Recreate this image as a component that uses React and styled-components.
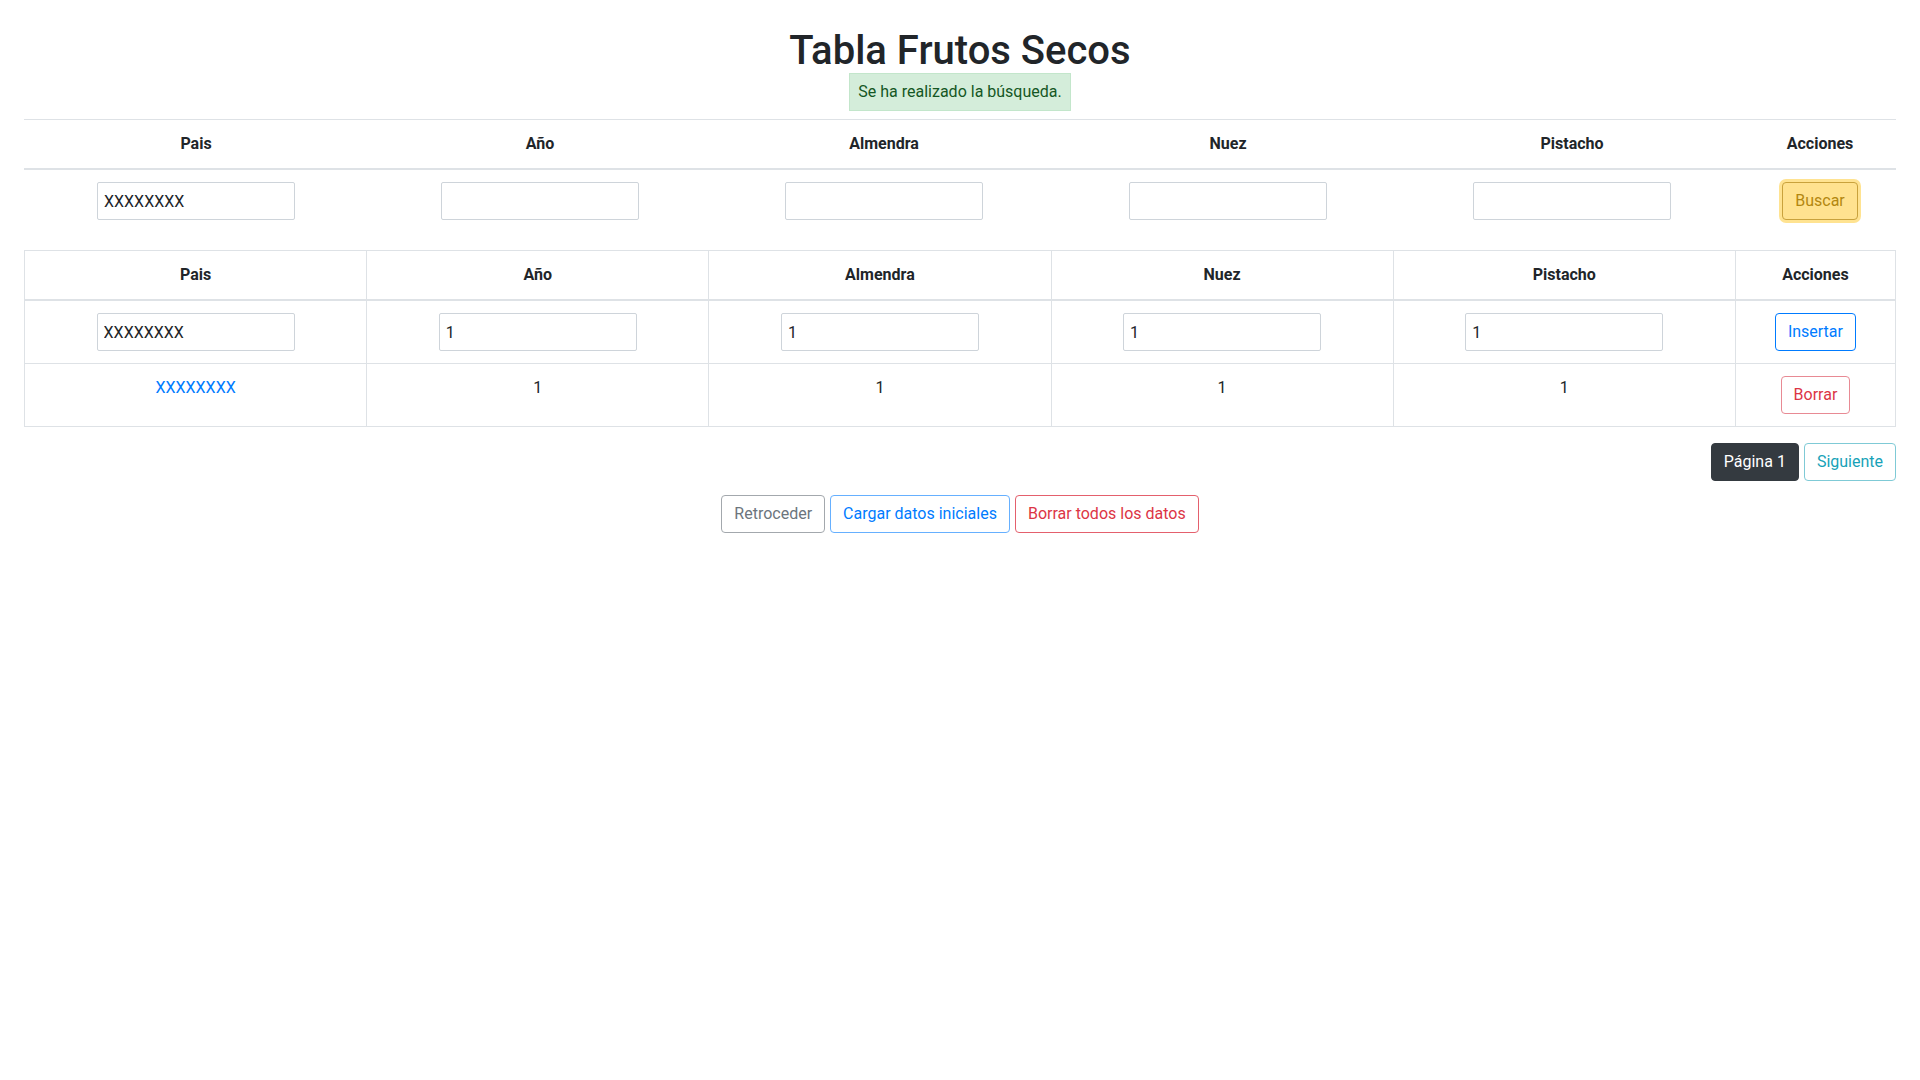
import styled, { createGlobalStyle, css } from "styled-components";

//STYLE

const GlobalStyle = createGlobalStyle`
  body {
    margin: 0;
    background: #fff;
    color: #212529;
    font-family: "Segoe UI", Roboto, "Liberation Sans", sans-serif;
    font-size: 16px;
    line-height: 24px;
  }
  * { box-sizing: border-box; }
`;

const Page = styled.div`
  padding: 0 24px;
  display: flex;
  flex-direction: column;
  align-items: center;
`;

const Title = styled.h1`
  margin: 29px 0 0;
  font-size: 40px;
  line-height: 44px;
  font-weight: 500;
  color: #212529;
`;

const Alert = styled.div`
  margin: 0 0 8px;
  padding: 6px 8px;
  background: #d4edda;
  border: 1px solid #c3e6cb;
  color: #155724;
`;

const Table = styled.table`
  width: 100%;
  table-layout: fixed;
  border-collapse: collapse;
  margin-bottom: ${(p) => (p.$bordered ? "16px" : "18px")};
  ${(p) =>
    p.$bordered &&
    css`
      border: 1px solid #dee2e6;
    `}
`;

const Th = styled.th`
  width: ${(p) => p.$w}px;
  padding: 12px;
  text-align: center;
  font-weight: 700;
  border-top: 1px solid #dee2e6;
  border-bottom: 2px solid #dee2e6;
  ${(p) =>
    p.$bordered &&
    css`
      border-left: 1px solid #dee2e6;
      border-right: 1px solid #dee2e6;
    `}
`;

const Td = styled.td`
  padding: 12px;
  text-align: center;
  vertical-align: top;
  ${(p) =>
    p.$bordered &&
    css`
      border: 1px solid #dee2e6;
    `}
`;

const Input = styled.input`
  display: block;
  margin: 0 auto;
  width: 198px;
  height: 38px;
  padding: 6px;
  font-family: inherit;
  font-size: 16px;
  color: #212529;
  background: #fff;
  border: 1px solid #ced4da;
  border-radius: 2px;
  outline: none;
`;

const Link = styled.a`
  color: #007bff;
  text-decoration: none;
`;

const Button = styled.button`
  display: inline-block;
  height: 38px;
  padding: 6px 12px;
  font-family: inherit;
  font-size: 16px;
  line-height: 24px;
  border-radius: 4px;
  border: 1px solid ${(p) => p.$border};
  color: ${(p) => p.$color};
  background: ${(p) => p.$bg || "#fff"};
  cursor: pointer;
  ${(p) =>
    p.$glow &&
    css`
      box-shadow: 0 0 0 3px ${p.$glow};
    `}
`;

const Pager = styled.div`
  align-self: stretch;
  display: flex;
  justify-content: flex-end;
  gap: 5px;
  margin-bottom: 14px;
`;

const Actions = styled.div`
  display: flex;
  justify-content: center;
  gap: 5px;
`;

//END STYLE

const cols = ["Pais", "Año", "Almendra", "Nuez", "Pistacho", "Acciones"];

const App = () => {
  return (
    <Page>
      <GlobalStyle />
      <Title>Tabla Frutos Secos</Title>
      <Alert>Se ha realizado la búsqueda.</Alert>

      <Table>
        <thead>
          <tr>
            {cols.map((c, i) => (
              <Th key={c} $w={i === 5 ? 152 : 344}>
                {c}
              </Th>
            ))}
          </tr>
        </thead>
        <tbody>
          <tr>
            <Td><Input defaultValue="XXXXXXXX" /></Td>
            <Td><Input /></Td>
            <Td><Input /></Td>
            <Td><Input /></Td>
            <Td><Input /></Td>
            <Td>
              <Button $border="#c9a23c" $color="#b3870f" $bg="#ffe28f" $glow="#ffe391">
                Buscar
              </Button>
            </Td>
          </tr>
        </tbody>
      </Table>

      <Table $bordered>
        <thead>
          <tr>
            {cols.map((c, i) => (
              <Th key={c} $bordered $w={i === 5 ? 160 : 342}>
                {c}
              </Th>
            ))}
          </tr>
        </thead>
        <tbody>
          <tr>
            <Td $bordered><Input defaultValue="XXXXXXXX" /></Td>
            <Td $bordered><Input defaultValue="1" /></Td>
            <Td $bordered><Input defaultValue="1" /></Td>
            <Td $bordered><Input defaultValue="1" /></Td>
            <Td $bordered><Input defaultValue="1" /></Td>
            <Td $bordered>
              <Button $border="#007bff" $color="#007bff">Insertar</Button>
            </Td>
          </tr>
          <tr>
            <Td $bordered><Link href="#">XXXXXXXX</Link></Td>
            <Td $bordered>1</Td>
            <Td $bordered>1</Td>
            <Td $bordered>1</Td>
            <Td $bordered>1</Td>
            <Td $bordered>
              <Button $border="#e88a94" $color="#dc3545">Borrar</Button>
            </Td>
          </tr>
        </tbody>
      </Table>

      <Pager>
        <Button $border="#343a40" $color="#fff" $bg="#343a40">Página 1</Button>
        <Button $border="#7fcad6" $color="#17a2b8">Siguiente</Button>
      </Pager>

      <Actions>
        <Button $border="#a3a8ad" $color="#6c757d">Retroceder</Button>
        <Button $border="#66b0ff" $color="#007bff">Cargar datos iniciales</Button>
        <Button $border="#e4606d" $color="#dc3545">Borrar todos los datos</Button>
      </Actions>
    </Page>
  );
};

export default App;
